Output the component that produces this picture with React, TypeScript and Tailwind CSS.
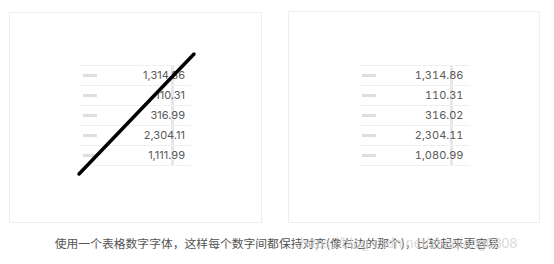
import React from "react";

const left = ["1,314.86", "110.31", "316.99", "2,304.11", "1,111.99"];
const right = ["1,314.86", "110.31", "316.02", "2,304.11", "1,080.99"];

function NumTable({ rows, tabular }: { rows: string[]; tabular: boolean }) {
  return (
    <div className="relative mx-auto w-[111px] border-b border-[#f0f0f0]">
      {/* alignment guide */}
      <div className="absolute left-[91px] top-0 bottom-0 w-[3px] bg-[#e6e6ec]" />
      {rows.map((r, i) => (
        <div
          key={i}
          className="relative flex h-[20px] items-center justify-between border-t border-[#f0f0f0] pl-[3px] pr-[6px]"
        >
          <span className="h-[3px] w-[14px] bg-[#dedede]" />
          <span
            className={
              "font-['Inter',sans-serif] text-[11px] text-[#5a5a5a] " +
              (tabular ? "tabular-nums" : "")
            }
          >
            {r}
          </span>
        </div>
      ))}
    </div>
  );
}

export default function App() {
  return (
    <div className="relative h-[264px] w-[554px] overflow-hidden bg-white">
      <div className="flex gap-[26px] pl-[9px] pt-[11px]">
        <div className="relative mt-[1px] h-[211px] w-[253px] border border-[#eeeeee] pt-[52px]">
          <NumTable rows={left} tabular={false} />
          <svg
            className="absolute left-0 top-0"
            width="253"
            height="211"
            viewBox="0 0 253 211"
          >
            <line x1="184" y1="41" x2="69" y2="161" stroke="#000" strokeWidth="3.5" strokeLinecap="round" />
          </svg>
        </div>
        <div className="relative h-[212px] w-[252px] border border-[#eeeeee] pt-[53px]">
          <NumTable rows={right} tabular={true} />
        </div>
      </div>

      <p className="mt-[11px] text-center font-['Noto_Sans_CJK_SC',sans-serif] text-[11.8px] text-[#555]">
        使用一个表格数字字体，这样每个数字间都保持对齐(像右边的那个)，比较起来更容易
      </p>
      {/* watermark */}
      <span className="absolute left-[300px] top-[233px] font-['Liberation_Sans',sans-serif] text-[14px] text-[#d2d2d2]/80">
        https://blog.csdn.net/zhaqiang0808
      </span>
    </div>
  );
}
